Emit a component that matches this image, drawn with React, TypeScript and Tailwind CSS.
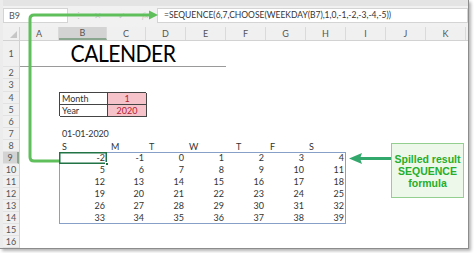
const COLS = [
  { l: "A", w: "w-[39px]" },
  { l: "B", w: "w-[48px]" },
  { l: "C", w: "w-[39px]" },
  { l: "D", w: "w-[40px]" },
  { l: "E", w: "w-[40px]" },
  { l: "F", w: "w-[40px]" },
  { l: "G", w: "w-[40px]" },
  { l: "H", w: "w-[40px]" },
  { l: "I", w: "w-[40px]" },
  { l: "J", w: "w-[40px]" },
  { l: "K", w: "w-[40px]" },
];

const ROWS = [
  { n: 1, h: "h-[26px]" },
  { n: 2, h: "h-[12px]" },
  { n: 3, h: "h-[13px]" },
  { n: 4, h: "h-[12px]" },
  { n: 5, h: "h-[12px]" },
  { n: 6, h: "h-[12px]" },
  { n: 7, h: "h-[12px]" },
  { n: 8, h: "h-[12px]" },
  { n: 9, h: "h-[12px]" },
  { n: 10, h: "h-[12px]" },
  { n: 11, h: "h-[12px]" },
  { n: 12, h: "h-[12px]" },
  { n: 13, h: "h-[12px]" },
  { n: 14, h: "h-[12px]" },
  { n: 15, h: "h-[12px]" },
  { n: 16, h: "h-[12px]" },
];

const DAYS = [
  { d: "S", pad: "pl-[3px]" },
  { d: "M", pad: "pl-[4px]" },
  { d: "T", pad: "pl-[3px]" },
  { d: "W", pad: "pl-[3px]" },
  { d: "T", pad: "pl-[10px]" },
  { d: "F", pad: "pl-[4px]" },
  { d: "S", pad: "pl-[3px]" },
];

const weeks = Array.from({ length: 6 }, (_, r) =>
  Array.from({ length: 7 }, (_, c) => r * 7 + c - 2)
);

export default function App() {
  return (
    <div className="relative w-[474px] h-[253px] bg-white overflow-hidden font-['Lato',sans-serif] text-[#333]">
      <div className="w-[469px] h-[249px] bg-[#ececec] border-r border-b border-[#8c8c8c] shadow-[2px_2px_3px_rgba(0,0,0,0.3)] pl-[3px] flex flex-col">
        {/* formula bar */}
        <div className="h-[27px] pt-[2px] flex items-start bg-[#f1f1f1] border-t-[6px] border-[#e4e4e4]">
          <div className="w-[65px] h-[15px] bg-white border border-[#d4d4d4] text-[9px] leading-[13px] pl-[5px] text-[#555]">
            B9
          </div>
          <div className="w-[20px] h-[15px] flex items-center justify-center text-[9px] text-[#c4c4c4]">
            ⋮
          </div>
          <div className="w-[69px] h-[15px] flex items-center text-[9px] text-[#c8c8c8]">
            <span className="ml-[6px]">✕</span>
            <span className="ml-[16px]">✓</span>
            <span className="ml-[16px] italic font-['Liberation_Serif',serif]">fx</span>
          </div>
          <div className="flex-1 h-[15px] bg-white border border-[#d4d4d4] text-[8.5px] leading-[13px] pl-[6px] text-[#333] whitespace-nowrap overflow-hidden">
            =SEQUENCE(6,7,CHOOSE(WEEKDAY(B7),1,0,-1,-2,-3,-4,-5))
          </div>
        </div>

        {/* column headers */}
        <div className="h-[14px] flex bg-[#f0f0f0] border-b border-[#d2d2d2]">
          <div className="w-[17px] relative border-r border-[#d2d2d2]">
            <div className="absolute right-[2px] bottom-[2px] w-0 h-0 border-l-[7px] border-l-transparent border-b-[7px] border-b-[#c6c6c6]" />
          </div>
          {COLS.map((c) => (
            <div
              key={c.l}
              className={`${c.w} shrink-0 flex items-center justify-center text-[9px] text-[#555] border-r border-[#dadada] ${
                c.l === "B" ? "bg-[#d3d3d3] border-b-2 border-b-[#8aa68f]" : ""
              }`}
            >
              {c.l}
            </div>
          ))}
        </div>

        {/* sheet body */}
        <div className="flex flex-1">
          <div className="w-[17px] flex flex-col bg-[#f0f0f0] border-r border-[#d2d2d2]">
            {ROWS.map((r) => (
              <div
                key={r.n}
                className={`${r.h} shrink-0 flex items-center justify-center text-[9px] text-[#555] border-b border-[#e2e2e2] ${
                  r.n === 9 ? "bg-[#d3d3d3] border-r-2 border-r-[#8aa68f]" : ""
                }`}
              >
                {r.n}
              </div>
            ))}
          </div>

          <div className="flex-1 bg-white grid grid-cols-[39px_48px_39px_40px_40px_40px_40px_40px_40px_40px_40px] grid-rows-[26px_12px_13px_repeat(13,12px)] text-[9px]">
            <div className="col-start-1 col-end-6 row-start-1 border-b border-[#9a9a9a] flex items-center justify-center text-[23px] font-normal tracking-[-0.6px] leading-none text-black">
              <span className="inline-block scale-x-[0.92]">CALENDER</span>
            </div>

            <div className="col-start-2 col-end-4 row-start-4 row-end-6 grid grid-cols-[48px_39px] grid-rows-[12px_12px] border-t border-l border-[#444]">
              <div className="border-r border-b border-[#444] pl-[2px] flex items-center">Month</div>
              <div className="border-r border-b border-[#444] bg-[#f6c3ca] text-[#b52033] flex items-center justify-center">1</div>
              <div className="border-r border-b border-[#444] pl-[2px] flex items-center">Year</div>
              <div className="border-r border-b border-[#444] bg-[#f6c3ca] text-[#b52033] flex items-center justify-center">2020</div>
            </div>

            <div className="col-start-2 col-end-4 row-start-7 pl-[3px] flex items-center tracking-[-0.2px]">01-01-2020</div>

            <div className="col-start-2 col-end-9 row-start-8 grid grid-cols-[48px_39px_40px_40px_40px_40px_40px]">
              {DAYS.map((d, i) => (
                <div key={i} className={`${d.pad} flex items-center`}>
                  {d.d}
                </div>
              ))}
            </div>

            <div className="col-start-2 col-end-9 row-start-9 row-end-15 grid grid-cols-[48px_39px_40px_40px_40px_40px_40px] grid-rows-[repeat(6,12px)] ring-1 ring-inset ring-[#86a0c8]">
              {weeks.flat().map((v, i) => (
                <div
                  key={i}
                  className={`relative flex items-center justify-end pr-[2px] ${
                    i === 0 ? "ring-[1.5px] ring-inset ring-[#217346]" : ""
                  }`}
                >
                  {v}
                  {i === 0 && (
                    <div className="absolute -right-[2px] -bottom-[2px] w-[4px] h-[4px] bg-[#217346] border border-white" />
                  )}
                </div>
              ))}
            </div>
          </div>
        </div>
      </div>

      {/* callout box */}
      <div className="absolute left-[391px] top-[143px] w-[73px] h-[55px] bg-[#edf8eb] border border-[#93d090] flex flex-col items-center justify-center font-['Liberation_Sans',sans-serif] font-bold text-[10.5px] leading-[12px] text-[#26ad2c]">
        <span>Spilled result</span>
        <span>SEQUENCE</span>
        <span>formula</span>
      </div>

      {/* arrows */}
      <svg className="absolute left-0 top-0 pointer-events-none" width="474" height="253">
        <path d="M151 15 H34 Q30 15 30 19 V157 Q30 161 34 161 H59" stroke="#5fbf5a" strokeWidth="3" fill="none" />
        <polygon points="149,10.5 158,15 149,19.5" fill="#5fbf5a" />
        <line x1="391" y1="158.5" x2="358" y2="158.5" stroke="#33a86c" strokeWidth="3" />
        <polygon points="349,158.5 362,153 360,158.5 362,164" fill="#33a86c" />
      </svg>
    </div>
  );
}
